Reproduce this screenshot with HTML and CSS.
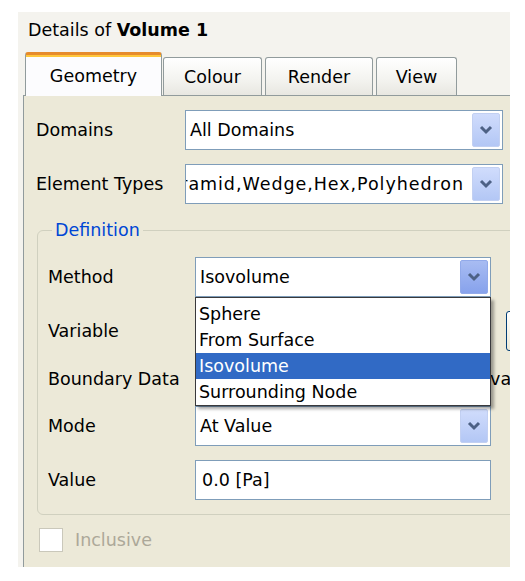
FILE: index.html
```html
<!DOCTYPE html>
<html>
<head>
<meta charset="utf-8">
<link rel="stylesheet" href="styles.css">
</head>
<body>
<div class="page">
  <div class="panel">
    <div class="title">Details of <b>Volume 1</b></div>
    <div class="tabs">
      <div class="tab active">Geometry</div>
      <div class="tab t-colour">Colour</div>
      <div class="tab t-render">Render</div>
      <div class="tab t-view">View</div>
    </div>
    <div class="pane">
      <div class="form top">
        <div class="label">Domains</div>
        <div class="combo wide">
          <span class="val">All Domains</span>
          <span class="btn"><svg width="14" height="10" viewBox="0 0 14 10"><path d="M2 2 L7 7 L12 2" fill="none" stroke="#4d6185" stroke-width="3"/></svg></span>
        </div>
        <div class="label">Element Types</div>
        <div class="combo wide">
          <span class="val scroll"><span>Tet,Pyramid,Wedge,Hex,Polyhedron</span></span>
          <span class="btn"><svg width="14" height="10" viewBox="0 0 14 10"><path d="M2 2 L7 7 L12 2" fill="none" stroke="#4d6185" stroke-width="3"/></svg></span>
        </div>
      </div>

      <fieldset class="group">
        <legend>Definition</legend>
        <div class="form inner">
          <div class="label">Method</div>
          <div class="field-wrap">
            <div class="combo">
              <span class="val">Isovolume</span>
              <span class="btn pressed"><svg width="14" height="10" viewBox="0 0 14 10"><path d="M2 2 L7 7 L12 2" fill="none" stroke="#4d6185" stroke-width="3"/></svg></span>
            </div>
            <ul class="popup">
              <li>Sphere</li>
              <li>From Surface</li>
              <li class="sel">Isovolume</li>
              <li>Surrounding Node</li>
            </ul>
          </div>

          <div class="label">Variable</div>
          <div class="varrow">
            <div class="combo">
              <span class="val">Pressure</span>
              <span class="btn"><svg width="14" height="10" viewBox="0 0 14 10"><path d="M2 2 L7 7 L12 2" fill="none" stroke="#4d6185" stroke-width="3"/></svg></span>
            </div>
            <div class="dots">...</div>
          </div>

          <div class="label">Boundary Data</div>
          <div class="radios">
            <div class="opt first"><span class="radio on"></span><span>Hybrid</span></div>
            <div class="opt"><span class="radio"></span><span>Conservative</span></div>
          </div>

          <div class="label">Mode</div>
          <div class="combo">
            <span class="val">At Value</span>
            <span class="btn"><svg width="14" height="10" viewBox="0 0 14 10"><path d="M2 2 L7 7 L12 2" fill="none" stroke="#4d6185" stroke-width="3"/></svg></span>
          </div>

          <div class="label">Value</div>
          <div class="textbox">0.0 [Pa]</div>
        </div>
      </fieldset>

      <div class="check"><span class="box"></span><span class="check-label">Inclusive</span></div>
    </div>
  </div>
</div>
</body>
</html>
```

FILE: styles.css
```css
html, body {
  margin: 0;
  padding: 0;
  background: #ffffff;
}

body {
  font-family: "DejaVu Sans", Verdana, sans-serif;
  font-size: 17.5px;
  line-height: 20px;
  color: #000;
}

.page {
  padding: 12px 0 0 18px;
}

.panel {
  width: 492px;
  height: 555px;
  background: #f4f3ee;
  overflow: hidden;
  display: flex;
  flex-direction: column;
}

.title {
  padding: 8px 10px 12px;
  height: 20px;
  white-space: nowrap;
}

.title b {
  font-weight: bold;
}

.tabs {
  display: flex;
  align-items: flex-end;
  gap: 3px;
  height: 43px;
  padding-left: 7px;
}

.tab {
  box-sizing: border-box;
  height: 38px;
  display: flex;
  align-items: center;
  justify-content: center;
  border: 1px solid #919b9c;
  border-bottom: none;
  border-radius: 3px 3px 0 0;
  background: linear-gradient(#ffffff, #f3f3ef 60%, #e8e7e1);
  white-space: nowrap;
}

.tab.active {
  position: relative;
  z-index: 2;
  width: 137px;
  height: 44px;
  margin-bottom: -1px;
  margin-right: -2px;
  border-top: 3px solid #e68b2c;
  box-shadow: inset 0 2px 0 #ffc73c;
  background: #fcfcfe;
  padding-top: 0;
}

.t-colour { width: 99px; }
.t-render { width: 108px; }
.t-view { width: 81px; }

.pane {
  flex: 1;
  margin-left: 5px;
  margin-right: -40px;
  border-left: 1px solid #919b9c;
  border-top: 1px solid #919b9c;
  background: #ece9d8;
  padding-top: 14px;
}

.form {
  display: grid;
  row-gap: 14px;
  align-items: center;
}

.form.top {
  grid-template-columns: 149px 318px;
  padding-left: 12px;
}

.form.inner {
  grid-template-columns: 147px auto;
  grid-template-rows: 40px 40px 27px 40px 40px;
}

.label {
  white-space: nowrap;
}

.combo {
  box-sizing: border-box;
  height: 40px;
  width: 296px;
  display: flex;
  align-items: center;
  border: 1px solid #7f9db9;
  background: #ffffff;
}

.combo.wide {
  width: 318px;
}

.val {
  flex: 1;
  min-width: 0;
  padding-left: 4px;
  white-space: nowrap;
  overflow: hidden;
}

.val.scroll {
  display: flex;
  justify-content: flex-end;
  padding-left: 0;
  padding-right: 8px;
}

.val.scroll span {
  flex: none;
  letter-spacing: 0.95px;
}

.btn {
  flex: none;
  box-sizing: border-box;
  width: 28px;
  height: 34px;
  margin-right: 2px;
  display: flex;
  align-items: center;
  justify-content: center;
  border: 1px solid #c2d0f2;
  border-radius: 2px;
  background: linear-gradient(#d0dcfc, #b3c7f5);
}

.btn svg {
  display: block;
}

.btn.pressed {
  border-color: #92aaea;
  background: linear-gradient(#a8bcf2, #87a2ec);
}

.group {
  margin: 16px 0 0 13px;
  padding: 17px 0 14px 10px;
  border: 1px solid #d0d0bf;
  border-radius: 6px;
  min-width: 0;
}

.group legend {
  color: #0046d5;
  padding: 0 3px;
  margin-left: 4px;
  line-height: 20px;
}

.field-wrap {
  position: relative;
  width: 296px;
}

.popup {
  position: absolute;
  top: 100%;
  left: 0;
  z-index: 10;
  box-sizing: border-box;
  width: 296px;
  margin: 0;
  padding: 3px 0 0;
  list-style: none;
  background: #ffffff;
  border: 1px solid #39393c;
  box-shadow: 3px 3px 3px rgba(0, 0, 0, 0.35);
}

.popup li {
  height: 26px;
  line-height: 26px;
  padding-left: 3px;
  white-space: nowrap;
}

.popup li.sel {
  background: #316ac5;
  color: #ffffff;
}

.varrow {
  display: flex;
  align-items: center;
  gap: 15px;
}

.dots {
  box-sizing: border-box;
  flex: none;
  width: 34px;
  height: 40px;
  border: 1px solid #003c74;
  border-radius: 3px;
  background: linear-gradient(#ffffff, #ece9d8);
  display: flex;
  align-items: center;
  justify-content: center;
}

.radios {
  display: flex;
  align-items: center;
  white-space: nowrap;
}

.opt {
  display: flex;
  align-items: center;
  gap: 6px;
}

.opt.first {
  width: 212px;
}

.radio {
  box-sizing: border-box;
  width: 16px;
  height: 16px;
  border: 1px solid #1c5180;
  border-radius: 50%;
  background: #ffffff;
}

.textbox {
  box-sizing: border-box;
  width: 296px;
  height: 40px;
  display: flex;
  align-items: center;
  padding-left: 6px;
  border: 1px solid #7f9db9;
  background: #ffffff;
  white-space: nowrap;
}

.check {
  display: flex;
  align-items: center;
  gap: 12px;
  margin: 13px 0 0 15px;
}

.box {
  box-sizing: border-box;
  width: 24px;
  height: 24px;
  border: 1px solid #cac8bb;
  background: #ffffff;
}

.check-label {
  color: #aca899;
}
```
